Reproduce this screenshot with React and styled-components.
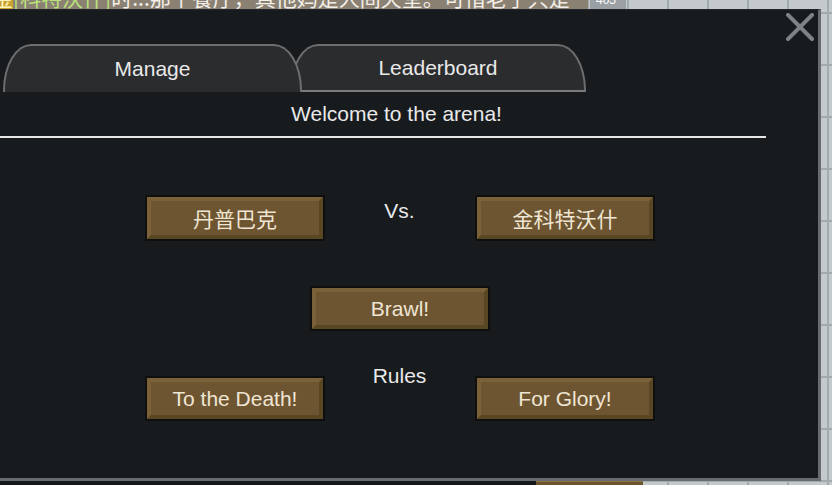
import React from "react";
import styled, { createGlobalStyle } from "styled-components";

const Global = createGlobalStyle`
  html, body { margin: 0; padding: 0; }
  body {
    width: 832px;
    height: 485px;
    overflow: hidden;
    background-color: #c4c9cb;
    background-image:
      linear-gradient(90deg, #a3aaad 2px, transparent 2px),
      linear-gradient(#a3aaad 2px, transparent 2px);
    background-size: 40px 52px;
    background-position: 27px 0, 0 12px;
    font-family: "Liberation Sans", "Noto Sans CJK SC", sans-serif;
  }
`;

const Page = styled.div`
  width: 832px;
  height: 485px;
  display: flex;
  flex-direction: column;
`;

const TopStrip = styled.div`
  height: 9px;
  display: flex;
  overflow: hidden;
`;

const Caption = styled.div`
  width: 588px;
  background: #8b8173;
  overflow: hidden;
  white-space: nowrap;
`;

const CaptionLine = styled.div`
  margin: -13px 0 0 -8px;
  font-size: 21px;
  line-height: 21px;
  color: #f3efe8;
  font-family: "Noto Sans CJK SC", sans-serif;
`;

const Gold = styled.span`
  background: #c9a232;
  color: #fff4b8;
`;

const Green = styled.span`
  color: #b9e07a;
`;

const Badge = styled.div`
  width: 36px;
  margin-left: 2px;
  background: #9aa0a3;
  color: #ffffff;
  font-size: 12px;
  line-height: 12px;
  overflow: hidden;
  & > span { display: block; margin-top: -6px; padding-left: 6px; }
`;

const Panel = styled.div`
  box-sizing: border-box;
  width: 821px;
  height: 472px;
  background: #171b1e;
  border-top: 1px solid #23262f;
  border-right: 3px solid #666c70;
  border-bottom: 3px solid #666c70;
  display: flex;
  flex-direction: column;
`;

const TopBar = styled.div`
  height: 34px;
  box-sizing: border-box;
  display: flex;
  justify-content: flex-end;
  padding: 3px 4px 0 0;
`;

const CloseButton = styled.button`
  width: 28px;
  height: 28px;
  padding: 0;
  border: none;
  background: none;
  display: block;
`;

const TabRow = styled.div`
  height: 48px;
  display: flex;
  padding-left: 3px;
`;

const Tab = styled.div`
  box-sizing: border-box;
  width: ${(p) => p.$width}px;
  height: 48px;
  margin-left: ${(p) => (p.$first ? 0 : -12)}px;
  position: relative;
  z-index: ${(p) => (p.$active ? 2 : 1)};
  background: #2b2c2e;
  border: 2px solid #6c6e70;
  border-bottom: ${(p) => (p.$active ? "none" : "2px solid #7a7c7e")};
  border-radius: 28px 28px 0 0 / 46px 46px 0 0;
  color: #e9e9e9;
  font-size: 21px;
  display: flex;
  align-items: center;
  justify-content: center;
`;

const Header = styled.div`
  box-sizing: border-box;
  width: 766px;
  height: 46px;
  border-bottom: 2px solid #e6e6e6;
  padding-left: 27px;
  display: flex;
  align-items: center;
  justify-content: center;
  color: #e9e9e9;
  font-size: 21px;
`;

const Body = styled.div`
  width: 800px;
  margin-top: 57px;
  display: grid;
  grid-template-columns: 179px 151px 180px;
  grid-auto-rows: auto;
  row-gap: 45px;
  justify-content: center;
`;

const Label = styled.div`
  justify-self: center;
  align-self: start;
  margin-top: ${(p) => p.$offset}px;
  font-size: 21px;
  line-height: 24px;
  color: #e9e9e9;
`;

const Button = styled.button`
  box-sizing: border-box;
  width: 180px;
  height: ${(p) => p.$h || 46}px;
  padding: 0;
  border: 2px solid #0f0f0f;
  background: #6d5532;
  ${(p) => (p.$wide ? "grid-column: 1 / -1; justify-self: center;" : "")}
  font-family: "Liberation Sans", "Noto Sans CJK SC", sans-serif;
`;

const Face = styled.span`
  box-sizing: border-box;
  height: 100%;
  display: flex;
  align-items: center;
  justify-content: center;
  border: 4px solid;
  border-color: #7a6139 #594622 #594622 #7a6139;
  color: #efe5d3;
  font-size: 21px;
`;

const BottomStrip = styled.div`
  height: 4px;
  display: flex;
`;

const DarkBit = styled.div`
  width: 536px;
  background: #15181b;
`;

const BrownBit = styled.div`
  width: 107px;
  box-sizing: border-box;
  background: #6c5431;
  border-top: 1px solid #8a6f40;
`;

const CloseIcon = () => (
  <svg width="28" height="28" viewBox="0 0 28 28">
    <path d="M2 2 L26 26 M26 2 L2 26" stroke="#7e8286" strokeWidth="4" strokeLinecap="square" fill="none" />
  </svg>
);

const GameButton = ({ children, ...rest }) => (
  <Button {...rest}>
    <Face>{children}</Face>
  </Button>
);

export default function App() {
  return (
    <Page>
      <Global />
      <TopStrip>
        <Caption>
          <CaptionLine>
            <Gold>金</Gold>
            <Green>[科特沃什]</Green>时...那个餐厅，真他妈是人间天堂。可惜老子只是
          </CaptionLine>
        </Caption>
        <Badge>
          <span>405</span>
        </Badge>
      </TopStrip>
      <Panel>
        <TopBar>
          <CloseButton aria-label="Close">
            <CloseIcon />
          </CloseButton>
        </TopBar>
        <TabRow>
          <Tab $first $active $width={299}>Manage</Tab>
          <Tab $width={296}>Leaderboard</Tab>
        </TabRow>
        <Header>Welcome to the arena!</Header>
        <Body>
          <GameButton>丹普巴克</GameButton>
          <Label $offset={4}>Vs.</Label>
          <GameButton>金科特沃什</GameButton>
          <GameButton $wide $h={45}>Brawl!</GameButton>
          <GameButton $h={45}>To the Death!</GameButton>
          <Label $offset={-12}>Rules</Label>
          <GameButton $h={45}>For Glory!</GameButton>
        </Body>
      </Panel>
      <BottomStrip>
        <DarkBit />
        <BrownBit />
      </BottomStrip>
    </Page>
  );
}
